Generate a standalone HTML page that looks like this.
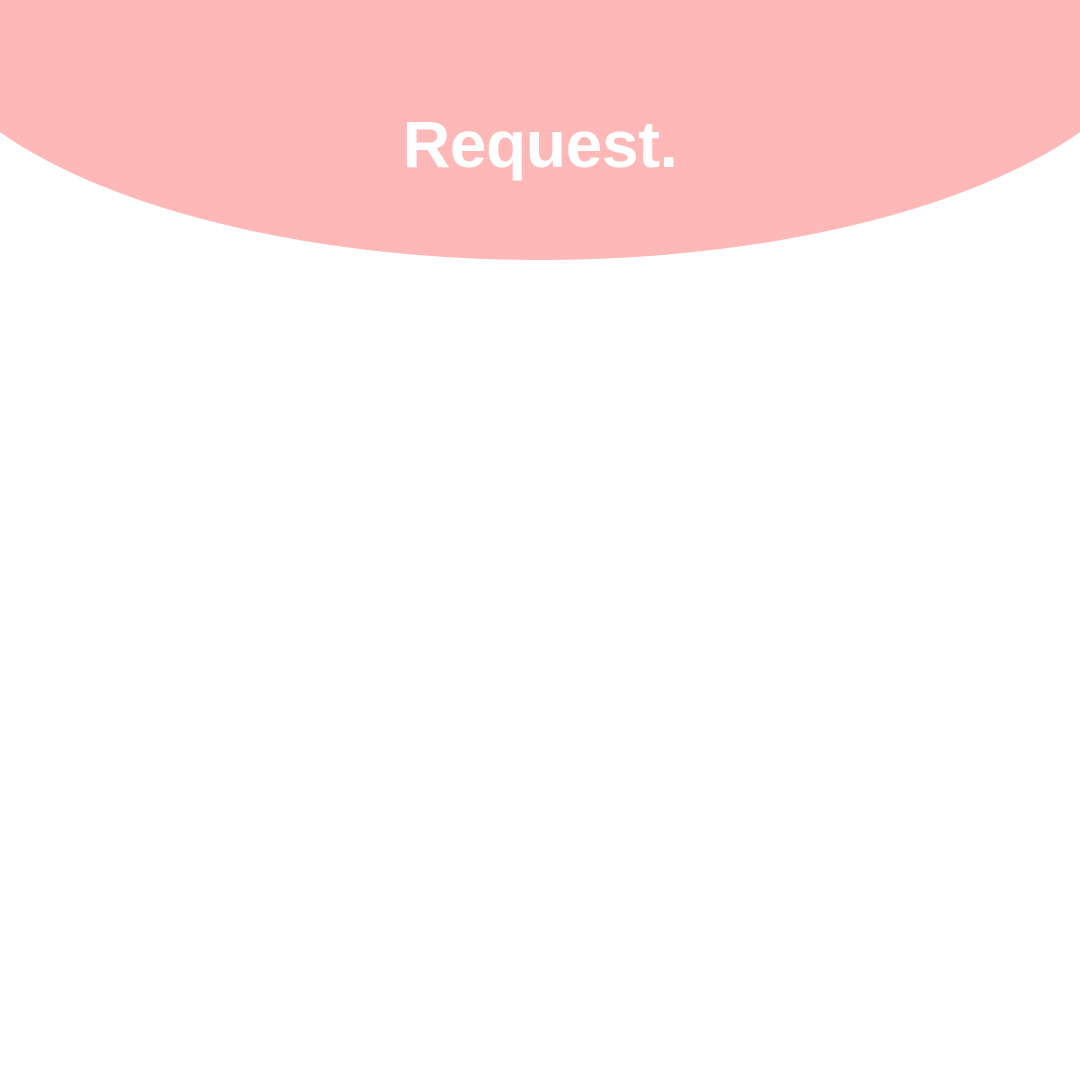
<!DOCTYPE html>
<html><head><meta charset="utf-8"><style>
html,body{margin:0;padding:0;width:1080px;height:1080px;background:#fff;overflow:hidden}
svg{position:absolute;left:0;top:0}
.t{position:absolute;left:0;width:1080px;top:107px;text-align:center;font-family:"Liberation Sans",sans-serif;font-weight:bold;font-size:66px;color:#fff;line-height:74px;letter-spacing:-0.5px}
</style></head><body>
<svg width="1080" height="1080"><ellipse cx="540" cy="0" rx="627" ry="260" fill="#FFB8B8"/></svg>
<div class="t">Request.</div>
</body></html>
